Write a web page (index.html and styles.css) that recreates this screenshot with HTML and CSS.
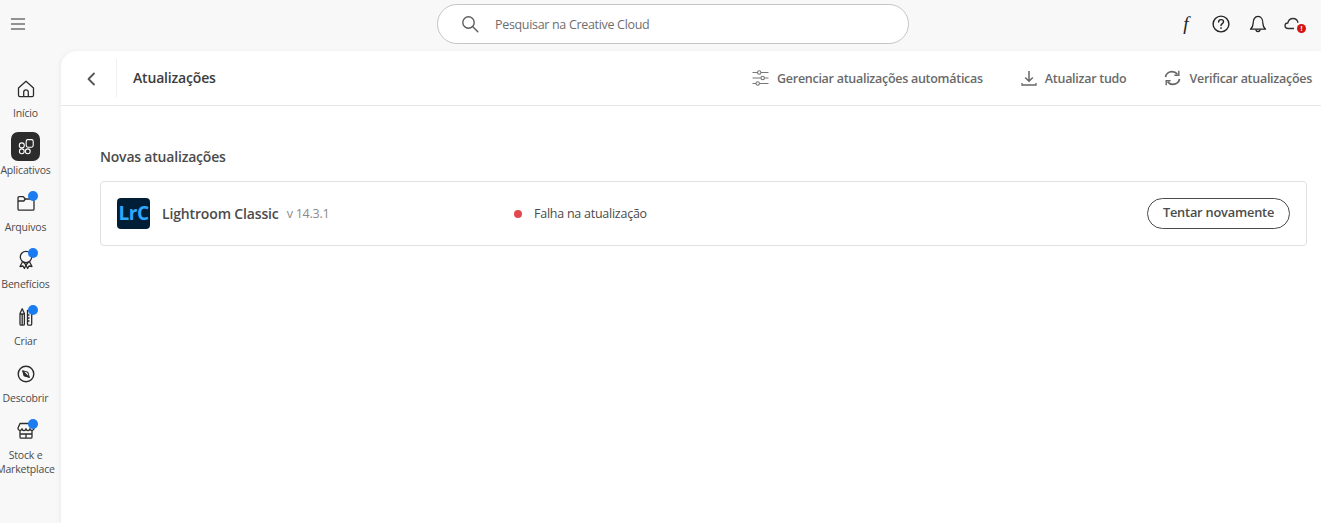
FILE: index.html
```html
<!DOCTYPE html>
<html lang="pt-BR">
<head>
<meta charset="utf-8">
<title>Creative Cloud</title>
<link rel="stylesheet" href="styles.css">
</head>
<body>
<div class="app">
  <header class="topbar">
    <div class="menu-cell">
      <svg class="i-menu" width="14" height="12" viewBox="0 0 14 12"><path d="M0 1h14M0 6h14M0 11h14" stroke="#707070" stroke-width="1.6" fill="none"/></svg>
    </div>
    <div class="search">
      <svg width="18" height="18" viewBox="0 0 18 18" fill="none" stroke="#5c5c5c" stroke-width="1.4" stroke-linecap="round"><circle cx="7.5" cy="7.5" r="5.7"/><path d="M11.8 11.8l5 5"/></svg>
      <span class="search-text">Pesquisar na Creative Cloud</span>
    </div>
    <div class="top-icons">
      <span class="font-f">f</span>
      <svg width="20" height="20" viewBox="0 0 20 20" fill="none" stroke="#222" stroke-width="1.4"><circle cx="10" cy="10" r="7.9"/><path d="M7.6 8c0-1.500 1.100-2.400 2.500-2.400s2.400.9 2.400 2.100c0 1.900-2.500 1.900-2.500 3.900" stroke-linecap="round"/><circle cx="10" cy="14.100" r=".9" fill="#222" stroke="none"/></svg>
      <svg width="20" height="20" viewBox="0 0 20 20" fill="none" stroke="#222" stroke-width="1.3" stroke-linejoin="round"><path d="M2.500 15.200c1.700-1.500 2.600-2.600 2.600-5.800C5.100 5.500 7 2.300 10 2.300s4.900 3.200 4.900 7.100c0 3.200.9 4.300 2.600 5.800z"/><path d="M8 15.500a2 2 0 0 0 4 0"/></svg>
      <span class="cloud">
        <svg width="20" height="16" viewBox="0 0 20 16" fill="none" stroke="#333" stroke-width="1.3" stroke-linejoin="round"><path d="M10 12.500H4.200C2.300 12.500 1 11.300 1 9.700c0-1.600 1.300-2.700 2.800-2.700C4.400 4.500 6.500 2.500 9 2.500c2.600 0 4.600 1.800 5 4.300"/></svg>
        <span class="cloud-alert">!</span>
      </span>
    </div>
  </header>
  <div class="body-row">
    <nav class="sidebar">
      <a class="nav-item">
        <span class="nav-icon">
          <svg width="18" height="18" viewBox="0 0 18 18" fill="none" stroke="#2c2c2c" stroke-width="1.300" stroke-linejoin="round"><path d="M1.500 8 9 1.200 16.500 8v7.300a1.300 1.300 0 0 1-1.300 1.300H2.800a1.300 1.300 0 0 1-1.300-1.300z"/><path d="M6.700 16.600v-4.400a2.300 2.300 0 0 1 4.600 0v4.400"/></svg>
        </span>
        <span class="nav-label">Início</span>
      </a>
      <a class="nav-item">
        <span class="nav-icon nav-icon-active">
          <svg width="18" height="18" viewBox="0 0 18 18" fill="none" stroke="#fff" stroke-width="1.100"><circle cx="4.800" cy="7.400" r="2.500"/><circle cx="4.800" cy="13.300" r="2.400"/><circle cx="10.800" cy="13.300" r="2.400"/><rect x="9.200" y="1.600" width="7" height="7.600" rx="1.600"/></svg>
        </span>
        <span class="nav-label">Aplicativos</span>
      </a>
      <a class="nav-item">
        <span class="nav-icon">
          <svg width="18" height="18" viewBox="0 0 18 18" fill="none" stroke="#2c2c2c" stroke-width="1.300" stroke-linejoin="round"><path d="M1 15V3.800c0-.7.500-1.200 1.200-1.200h4.100l2 2.400h7.500c.7 0 1.200.5 1.200 1.200V15c0 .7-.5 1.200-1.200 1.200H2.200c-.7 0-1.200-.5-1.200-1.200z"/><path d="M1 7h5.800l1.500-2"/></svg>
          <span class="badge"></span>
        </span>
        <span class="nav-label">Arquivos</span>
      </a>
      <a class="nav-item">
        <span class="nav-icon">
          <svg width="18" height="20" viewBox="0 0 18 20" fill="none" stroke="#2c2c2c" stroke-width="1.300" stroke-linejoin="round"><circle cx="9" cy="7" r="5.700"/><path d="M5.500 11.800 3 16.500l3-.5 1.400 2.500L9 15l-2.500-3M12.500 11.800 15 16.500l-3-.5-1.400 2.500L9 15l2.500-3"/></svg>
          <span class="badge"></span>
        </span>
        <span class="nav-label">Benefícios</span>
      </a>
      <a class="nav-item">
        <span class="nav-icon">
          <svg width="18" height="20" viewBox="0 0 18 20" fill="none" stroke="#2c2c2c" stroke-width="1.300" stroke-linejoin="round"><path d="M3 6.500 5.200 1.800l2.200 4.700V17c0 .7-.5 1.200-1.200 1.200h-2C3.500 18.200 3 17.700 3 17z"/><path d="M3 7h4.400M5.200 7v11"/><path d="M10.500 3.500h4.200V17c0 .7-.5 1.200-1.200 1.200h-1.800c-.7 0-1.200-.5-1.200-1.200z"/><path d="M10.500 8h2M10.500 11h2M10.500 14h2"/></svg>
          <span class="badge"></span>
        </span>
        <span class="nav-label">Criar</span>
      </a>
      <a class="nav-item">
        <span class="nav-icon">
          <svg width="18" height="18" viewBox="0 0 18 18" fill="none" stroke="#2c2c2c" stroke-width="1.400" stroke-linejoin="round"><circle cx="9" cy="9" r="7.800"/><path d="M5.800 5.800 10.800 7.200 12.300 12.300 7.200 10.800z" stroke-width="1.100"/><path d="M5.800 5.800 12.300 12.300 7.200 10.800z" fill="#2c2c2c" stroke-width=".8"/></svg>
        </span>
        <span class="nav-label">Descobrir</span>
      </a>
      <a class="nav-item">
        <span class="nav-icon">
          <svg width="18" height="18" viewBox="0 0 18 18" fill="none" stroke="#2c2c2c" stroke-width="1.300" stroke-linejoin="round"><path d="M3 1.500h12l2 4.500a2 2 0 0 1-4 .6 2 2 0 0 1-4 0 2 2 0 0 1-4 0A2 2 0 0 1 1 6z"/><path d="M3 8.500V15c0 .7.500 1.200 1.200 1.200h9.600c.7 0 1.200-.5 1.200-1.200V8.500"/><path d="M3 12h12M9 12v4"/></svg>
          <span class="badge"></span>
        </span>
        <span class="nav-label">Stock e Marketplace</span>
      </a>
    </nav>
    <main class="panel">
      <div class="panel-header">
        <button class="back" type="button">
          <svg width="10" height="14" viewBox="0 0 10 14" fill="none" stroke="#555" stroke-width="1.800" stroke-linecap="round" stroke-linejoin="round"><path d="M8 1.500 2.500 7 8 12.500"/></svg>
        </button>
        <h1 class="panel-title">Atualizações</h1>
        <div class="actions">
          <span class="action">
            <svg width="17" height="16" viewBox="0 0 17 16" fill="none" stroke="#777" stroke-width="1.100"><path d="M.5 2.500h5M9 2.500h7.500M.5 8h8.500M12.500 8h4M.5 13.500h3.500M7.500 13.500h9"/><circle cx="7.200" cy="2.500" r="1.700"/><circle cx="10.700" cy="8" r="1.700"/><circle cx="5.700" cy="13.500" r="1.700"/></svg>
            Gerenciar atualizações automáticas
          </span>
          <span class="action">
            <svg width="16" height="16" viewBox="0 0 16 16" fill="none" stroke="#666" stroke-width="1.500"><path d="M8 1v10M4.200 7.500 8 11.300l3.800-3.800"/><path d="M1 13v2h14v-2" stroke-width="1.300"/></svg>
            Atualizar tudo
          </span>
          <span class="action">
            <svg width="17" height="16" viewBox="0 0 17 16" fill="none" stroke="#666" stroke-width="1.800"><path d="M1.500 7C2 3.800 4.800 1.600 8 1.600c2.200 0 4 .9 5.300 2.500"/><path d="M15.500 9c-.5 3.200-3.300 5.400-6.500 5.400-2.200 0-4-.9-5.300-2.500"/><path d="M14.800.8v4.400h-4.400M2.200 15.200v-4.400h4.400" stroke-width="1.400"/></svg>
            Verificar atualizações
          </span>
        </div>
      </div>
      <section class="content">
        <h2 class="section-title">Novas atualizações</h2>
        <div class="card">
          <div class="app-id">
            <span class="lrc">LrC</span>
            <span class="app-name">Lightroom Classic</span>
            <span class="app-version">v 14.3.1</span>
          </div>
          <div class="status"><span class="dot"></span>Falha na atualização</div>
          <button class="retry" type="button">Tentar novamente</button>
        </div>
      </section>
    </main>
  </div>
</div>
</body>
</html>
```

FILE: styles.css
```css
* { box-sizing: border-box; }
html, body { margin: 0; height: 100%; overflow: hidden; }
body {
  background: #f8f8f8;
  font-family: "Open Sans", "Noto Sans", sans-serif;
  color: #4b4b4b;
}
.app { height: 523px; display: flex; flex-direction: column; }

.topbar {
  height: 51px;
  display: grid;
  grid-template-columns: 437px 472px 1fr;
  padding-bottom: 3px;
  flex: none;
}
.menu-cell { padding: 18px 0 0 11px; }
.i-menu { display: block; }
.search {
  margin-top: 4px;
  height: 40px;
  border: 1px solid #c6c6c6;
  border-radius: 20px;
  background: #fff;
  display: flex;
  align-items: center;
  padding-left: 23px;
  gap: 16px;
}
.search-text { font-size: 12.500px; color: #6e6e6e; letter-spacing: -.32px; }
.top-icons {
  display: flex;
  align-items: center;
  gap: 17px;
  padding-left: 271px;
}
.font-f {
  font-family: "Liberation Serif", serif;
  font-style: italic;
  font-size: 19px;
  color: #222;
  width: 12px;
  text-align: center;
  margin-right: 2px;
}
.cloud { position: relative; display: flex; width: 20px; height: 16px; margin-left: -1px; }
.cloud-alert {
  position: absolute;
  right: -2px;
  bottom: -1px;
  width: 9px;
  height: 9px;
  border-radius: 50%;
  background: #d31510;
  color: #fff;
  font-size: 7px;
  line-height: 9px;
  font-weight: 700;
  text-align: center;
}

.body-row { flex: 1; min-height: 0; display: flex; }
.sidebar {
  width: 61px;
  flex: none;
  padding: 24px 10px 0 0;
  display: flex;
  flex-direction: column;
}
.nav-item {
  height: 57px;
  width: 51px;
  display: flex;
  flex-direction: column;
  align-items: center;
  color: #4b4b4b;
  font-size: 10.500px;
  line-height: 14px;
}
.nav-icon {
  position: relative;
  width: 29px;
  height: 29px;
  flex: none;
  display: flex;
  align-items: center;
  justify-content: center;
  margin-bottom: 2px;
  padding-bottom: 2px;
}
.nav-icon-active { background: #2c2c2c; border-radius: 7px; padding-bottom: 0; }
.badge {
  position: absolute;
  top: 2px;
  right: 2px;
  width: 10px;
  height: 10px;
  border-radius: 50%;
  background: #1a7cf0;
}
.nav-label {
  width: 70px;
  text-align: center;
  letter-spacing: -.18px;
  flex: none;
}

.panel {
  flex: 1;
  min-width: 0;
  background: #fff;
  border-top-left-radius: 16px;
  box-shadow: -2px 0 4px rgba(0, 0, 0, .04);
}
.panel-header {
  height: 55px;
  border-bottom: 1px solid #e6e6e6;
  display: flex;
  align-items: center;
  padding-right: 9px;
}
.back {
  width: 56px;
  height: 38px;
  padding: 2px 0 0 25px;
  border: 0;
  border-right: 1px solid #efefef;
  background: none;
  display: flex;
  align-items: center;
}
.panel-title {
  margin: -2px 0 0 16px;
  font-size: 14px;
  font-weight: 600;
  color: #3c3c3c;
  letter-spacing: -.18px;
}
.actions { margin-left: auto; display: flex; align-items: center; gap: 38px; }
.action {
  display: flex;
  align-items: center;
  gap: 8px;
  font-size: 12.500px;
  font-weight: 600;
  color: #6a6a6a;
  letter-spacing: -.28px;
}
.content { padding: 41px 14px 0 39px; }
.section-title {
  margin: 0 0 15px;
  font-size: 14px;
  line-height: 19px;
  font-weight: 600;
  color: #4b4b4b;
  letter-spacing: -.2px;
}
.card {
  height: 65px;
  border: 1px solid #e1e1e1;
  border-radius: 4px;
  display: flex;
  align-items: center;
  padding: 0 16px;
}
.app-id { width: 397px; display: flex; align-items: center; flex: none; }
.lrc {
  width: 33px;
  height: 31px;
  border-radius: 4px;
  background: #001e36;
  color: #31a8ff;
  font-size: 19px;
  font-weight: 700;
  line-height: 31px;
  text-align: center;
  letter-spacing: -.5px;
  margin-right: 12px;
}
.app-name { font-size: 14px; font-weight: 600; color: #4b4b4b; letter-spacing: -.15px; margin-right: 8px; }
.app-version { font-size: 12.500px; color: #8a8a8a; letter-spacing: -.25px; }
.status { display: flex; align-items: center; gap: 12px; font-size: 12.500px; color: #4b4b4b; letter-spacing: -.25px; }
.dot { width: 8px; height: 8px; border-radius: 50%; background: #e34850; }
.retry {
  margin-left: auto;
  width: 143px;
  height: 31px;
  border: 1px solid #4b4b4b;
  border-radius: 16px;
  background: #fff;
  font: 600 12.800px "Open Sans", "Noto Sans", sans-serif;
  color: #4b4b4b;
  letter-spacing: -.2px;
  padding: 0 0 4px;
}
```
